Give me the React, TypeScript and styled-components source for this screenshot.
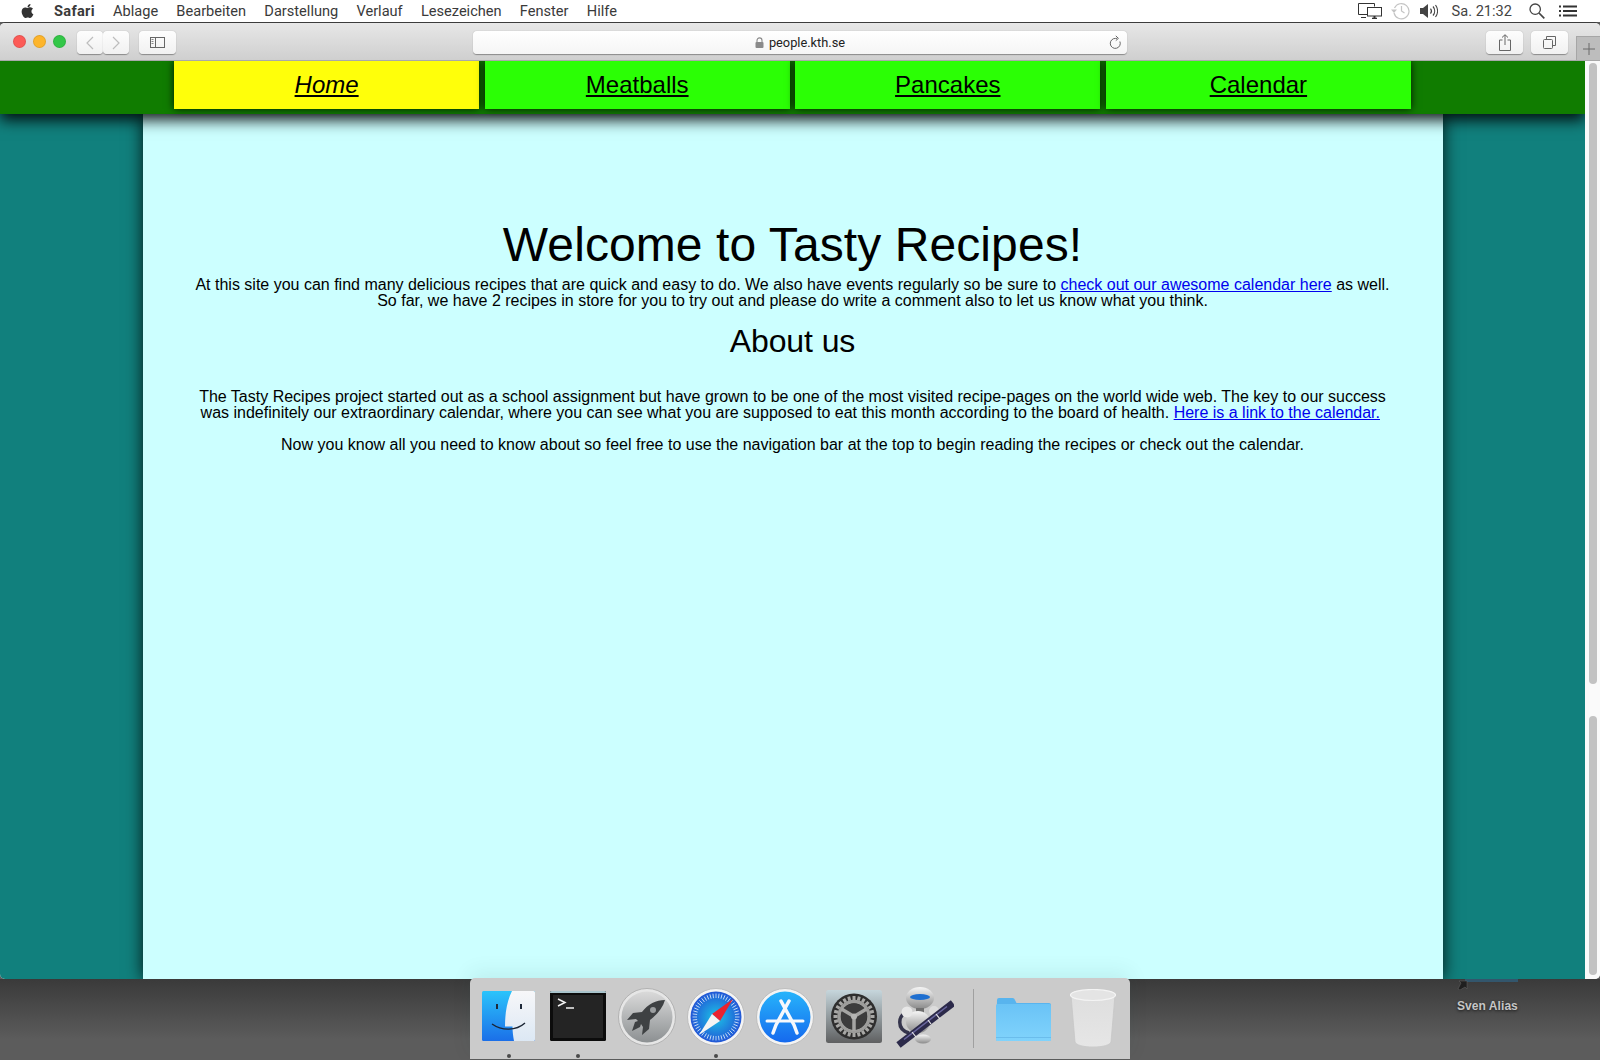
import React from 'react';
import styled, { createGlobalStyle } from 'styled-components';
import { FaApple } from 'react-icons/fa';

const GlobalStyle = createGlobalStyle`
    html, body {
        margin: 0;
        padding: 0;
        background: #5c5c5c;
    }
    * {
        box-sizing: border-box;
    }
`;

const Screen = styled.div`
    width: 1600px;
    height: 1060px;
    overflow: hidden;
    display: flex;
    flex-direction: column;
    font-family: 'Liberation Sans', Arial, sans-serif;
`;

/* system menu bar */
const MenuBar = styled.div`
    height: 22px;
    flex: none;
    background: #fff;
    display: flex;
    align-items: center;
    padding: 0 23px 0 20px;
    font-family: Roboto, 'Liberation Sans', sans-serif;
    font-size: 14.6px;
    color: #3a3a3a;
`;

const AppleMark = styled.span`
    display: flex;
    width: 15px;
    margin-right: 19px;
    color: #333;
    font-size: 16px;
`;

const MenuItem = styled.span<{ $bold?: boolean }>`
    margin-right: 18.2px;
    font-weight: ${p => (p.$bold ? 700 : 400)};
    letter-spacing: ${p => (p.$bold ? '0.3px' : '0')};
`;

const StatusArea = styled.div`
    margin-left: auto;
    display: flex;
    align-items: center;
    color: #444;
`;

const StatusSlot = styled.span<{ $gap: number }>`
    display: flex;
    margin-right: ${p => p.$gap}px;
`;

/* browser window */
const BrowserWindow = styled.div`
    height: 957px;
    flex: none;
    display: flex;
    flex-direction: column;
    overflow: hidden;
    border-top: 1px solid #3c3c3c;
    border-radius: 5px;
    background: #fafafa;
`;

const Toolbar = styled.div`
    height: 38px;
    flex: none;
    position: relative;
    z-index: 3;
    display: flex;
    align-items: flex-start;
    padding: 8px 0 0 13px;
    background: linear-gradient(#e7e7e7, #cfcfcf);
    border-bottom: 1px solid #a9a9a9;
`;

const TrafficLight = styled.span<{ $color: string }>`
    width: 13px;
    height: 13px;
    margin: 4px 7px 0 0;
    border-radius: 50%;
    background: ${p => p.$color};
    border: 1px solid rgba(0, 0, 0, 0.1);
`;

const ToolButton = styled.div<{ $width: number; $left?: number }>`
    width: ${p => p.$width}px;
    height: 23px;
    margin-left: ${p => p.$left ?? 0}px;
    display: flex;
    align-items: center;
    justify-content: center;
    flex: none;
    background: linear-gradient(#fdfdfd, #f1f1f1);
    border-radius: 4px;
    box-shadow: 0 0.5px 1px rgba(0, 0, 0, 0.35);
`;

const AddressBar = styled.div`
    position: relative;
    width: 654px;
    height: 23px;
    margin: 0 359px 0 297px;
    flex: none;
    display: flex;
    align-items: center;
    justify-content: center;
    gap: 5px;
    background: linear-gradient(#ffffff, #f5f5f5);
    border-radius: 4px;
    box-shadow: 0 0.5px 1px rgba(0, 0, 0, 0.35);
    font-family: Roboto, 'Liberation Sans', sans-serif;
    font-size: 12.8px;
    color: #222;
`;

const ReloadSlot = styled.span`
    position: absolute;
    right: 5px;
    top: 4px;
    display: flex;
`;

const NewTabTab = styled.div`
    position: absolute;
    right: 0;
    top: 13px;
    width: 24px;
    height: 24px;
    display: flex;
    align-items: center;
    justify-content: center;
    background: #bdbdbd;
    border-left: 1px solid #a6a6a6;
    border-top: 1px solid #a6a6a6;
`;

const Viewport = styled.div`
    flex: 1;
    min-height: 0;
    display: flex;
`;

const Page = styled.div`
    flex: 1;
    min-width: 0;
    display: flex;
    flex-direction: column;
    background: #11807d;
`;

const Scrollbar = styled.div`
    width: 15px;
    flex: none;
    position: relative;
    z-index: 3;
    padding: 2px 3px 0 4px;
    background: #fafafa;
`;

const ScrollThumb = styled.div<{ $height: number; $gap?: number }>`
    height: ${p => p.$height}px;
    margin-bottom: ${p => p.$gap ?? 0}px;
    background: #c2c2c2;
    border-radius: 4px;
`;

/* the page inside the browser */
const Nav = styled.nav`
    position: relative;
    z-index: 2;
    height: 53px;
    flex: none;
    display: flex;
    justify-content: center;
    gap: 5.6px;
    background: #107c00;
    box-shadow: 0 6px 14px rgba(0, 0, 0, 0.9);
`;

const NavLink = styled.a<{ $current?: boolean }>`
    width: 305px;
    height: 48px;
    display: flex;
    align-items: center;
    justify-content: center;
    background: ${p => (p.$current ? '#ffff0a' : '#2bff05')};
    box-shadow: 0 0 8px rgba(0, 0, 0, 0.85);
    color: #000;
    font-size: 24px;
    font-style: ${p => (p.$current ? 'italic' : 'normal')};
    text-decoration: underline;
`;

const Main = styled.main`
    width: 1300px;
    flex: 1;
    margin: 0 auto;
    padding-top: 101px;
    background: #ccffff;
    color: #000;
    text-align: center;
    box-shadow: 0 0 16px rgba(0, 0, 0, 0.85);
`;

const Title = styled.h1`
    margin: 0 0 2px;
    font-size: 48px;
    font-weight: 400;
    line-height: 60px;
    letter-spacing: 0.09px;
`;

const Subtitle = styled.h2`
    margin: -2px 0 29px;
    font-size: 32px;
    font-weight: 400;
    line-height: 37px;
    letter-spacing: -0.1px;
`;

const Para = styled.p`
    margin: 0 0 16px;
    font-size: 16px;
    line-height: 16px;
`;

const InlineLink = styled.a`
    color: #0000ee;
    text-decoration: underline;
`;

/* desktop strip below the window */
const Desktop = styled.div`
    flex: 1;
    position: relative;
    display: flex;
    justify-content: center;
    background: linear-gradient(#3a3a3a, #5c5c5c 75%);
`;

const Dock = styled.div`
    position: relative;
    width: 660px;
    height: 81px;
    margin-top: -1px;
    padding-left: 4px;
    display: flex;
    align-items: flex-start;
    background: #cbcbcb;
    border-radius: 5px 5px 0 0;
    box-shadow: 0 -6px 20px rgba(0, 60, 60, 0.08);
`;

const DockSlot = styled.div<{ $width?: number; $top?: number }>`
    position: relative;
    width: ${p => p.$width ?? 69}px;
    flex: none;
    padding-top: ${p => p.$top ?? 10}px;
    display: flex;
    justify-content: center;
`;

const RunningDot = styled.span`
    position: absolute;
    top: 76px;
    left: 50%;
    width: 4px;
    height: 4px;
    margin-left: -2px;
    border-radius: 50%;
    background: #4a4a4a;
`;

const DockDivider = styled.div`
    width: 1px;
    height: 59px;
    margin: 11px 15px 0 16px;
    flex: none;
    background: #a0a0a0;
`;

const DesktopAlias = styled.div`
    position: absolute;
    left: 1457px;
    top: 0;
    width: 70px;
`;

const AliasName = styled.div`
    margin-top: 9px;
    color: #c6c6c6;
    font-size: 12px;
    font-weight: 700;
    white-space: nowrap;
    letter-spacing: 0.06px;
    text-shadow: 0 1px 3px rgba(0, 0, 0, 0.7);
`;

/* drawings */
const DisplayIcon = () => (
    <svg width="24" height="16" viewBox="0 0 24 16" fill="none" stroke="#333" strokeWidth="1">
        <path d="M9 11.5H.5V.5h16v3" />
        <path d="M3 14.5h5" />
        <rect x="9.5" y="4.5" width="14" height="8.5" fill="#fff" />
        <path d="M14 15.5h5" strokeWidth="1.6" />
        <path d="M16.5 13v2" strokeWidth="2" />
    </svg>
);

const ClockIcon = () => (
    <svg width="19" height="18" viewBox="0 0 19 18" fill="none" stroke="#c4c4c4" strokeWidth="1.2">
        <path d="M3.5 6A7.6 7.6 0 1 1 3 11" />
        <path d="M0 7.5h6L3 11z" fill="#c4c4c4" stroke="none" />
        <path d="M10.5 4v5l3 2" />
    </svg>
);

const VolumeIcon = () => (
    <svg width="18" height="14" viewBox="0 0 18 14" fill="none" stroke="#444" strokeWidth="1.2">
        <path d="M0 4h3l5-4v14l-5-4H0z" fill="#444" stroke="none" />
        <path d="M10.5 4.5a4 4 0 0 1 0 5" />
        <path d="M13 2.5a7 7 0 0 1 0 9" />
        <path d="M15.5 1a10 10 0 0 1 0 12" />
    </svg>
);

const SearchIcon = () => (
    <svg width="16" height="16" viewBox="0 0 16 16" fill="none" stroke="#444" strokeWidth="1.3">
        <circle cx="6.2" cy="6.2" r="5.2" />
        <path d="M10 10l5.3 5.3" strokeWidth="1.7" />
    </svg>
);

const ListIcon = () => (
    <svg width="18" height="12" viewBox="0 0 18 12" fill="#333">
        <rect x="0" y="0.5" width="2" height="2" />
        <rect x="0" y="5" width="2" height="2" />
        <rect x="0" y="9.5" width="2" height="2" />
        <rect x="4" y="0.5" width="14" height="2" />
        <rect x="4" y="5" width="14" height="2" />
        <rect x="4" y="9.5" width="14" height="2" />
    </svg>
);

const ChevronIcon = ({ back }: { back?: boolean }) => (
    <svg width="8" height="14" viewBox="0 0 8 14" fill="none" stroke="#bdbdbd" strokeWidth="1.2">
        <path d={back ? 'M7 1L1 7l6 6' : 'M1 1l6 6-6 6'} />
    </svg>
);

const SidebarIcon = () => (
    <svg width="15" height="11" viewBox="0 0 15 11" fill="none" stroke="#666" strokeWidth="1">
        <rect x="0.5" y="0.5" width="14" height="10" />
        <path d="M5.5 0.5v10" />
        <path d="M1.5 2.5h2M1.5 4.5h2M1.5 6.5h2" stroke="#888" />
    </svg>
);

const LockIcon = () => (
    <svg width="9" height="11" viewBox="0 0 9 11">
        <path d="M2 5V3.4a2.5 2.5 0 0 1 5 0V5" fill="none" stroke="#8a8a8a" strokeWidth="1.1" />
        <rect x="0.5" y="5" width="8" height="6" rx="1" fill="#8a8a8a" />
    </svg>
);

const ReloadIcon = () => (
    <svg width="13" height="15" viewBox="0 0 13 15" fill="none" stroke="#666" strokeWidth="1">
        <path d="M10.9 6.5a5 5 0 1 1-4.4-3.1h1.5" />
        <path d="M6.8 .8l2.6 2.6-2.6 2.2" />
    </svg>
);

const ShareIcon = () => (
    <svg width="12" height="17" viewBox="0 0 12 17" fill="none" stroke="#666" strokeWidth="1">
        <path d="M3.5 6H.5v10.5h11V6h-3" />
        <path d="M6 11V1M3 3.5L6 .7l3 2.8" />
    </svg>
);

const TabsIcon = () => (
    <svg width="13" height="13" viewBox="0 0 13 13" fill="none" stroke="#666" strokeWidth="1">
        <rect x="0.5" y="3.5" width="9" height="9" rx="1" />
        <path d="M3.5 3V.5h9v9H10" />
    </svg>
);

const PlusIcon = () => (
    <svg width="12" height="12" viewBox="0 0 12 12" stroke="#6b6b6b" strokeWidth="1">
        <path d="M6 0v12M0 6h12" />
    </svg>
);

const FinderIcon = () => (
    <svg width="53" height="50" viewBox="0 0 53 50">
        <defs>
            <linearGradient id="finderBlue" x1="0" y1="0" x2="0" y2="1">
                <stop offset="0" stopColor="#2bc4fb" />
                <stop offset="1" stopColor="#1b6fe8" />
            </linearGradient>
            <linearGradient id="finderLight" x1="0" y1="0" x2="0" y2="1">
                <stop offset="0" stopColor="#f7f7f9" />
                <stop offset="1" stopColor="#dce8f4" />
            </linearGradient>
        </defs>
        <rect width="53" height="50" rx="1.5" fill="url(#finderBlue)" />
        <path d="M30 0h21.5A1.5 1.5 0 0 1 53 1.5v47a1.5 1.5 0 0 1-1.5 1.5H32c-1-5-1.5-10-1.5-14.5H23C23 22 25 10 30 0z" fill="url(#finderLight)" />
        <path d="M15 13v5M39 13v5" stroke="#1f2a3a" strokeWidth="2" />
        <path d="M10 33c10 7 24 7 33-1" fill="none" stroke="#1a2433" strokeWidth="1.4" />
    </svg>
);

const TerminalIcon = () => (
    <svg width="56" height="50" viewBox="0 0 56 50">
        <rect width="56" height="50" rx="1.5" fill="#0c0c0c" />
        <path d="M0 1.5A1.5 1.5 0 0 1 1.5 0h53A1.5 1.5 0 0 1 56 1.5V2H0z" fill="#a9c4cc" />
        <rect x="3" y="4" width="50" height="43" fill="#242424" />
        <path d="M8 8l7 3.5-7 3.5" fill="none" stroke="#f2f2f2" strokeWidth="1.5" />
        <path d="M16 17h8" stroke="#f2f2f2" strokeWidth="1.5" />
    </svg>
);

const LaunchpadIcon = () => (
    <svg width="58" height="58" viewBox="0 0 58 58">
        <defs>
            <linearGradient id="launchFace" x1="0" y1="0" x2="0" y2="1">
                <stop offset="0" stopColor="#dadada" />
                <stop offset="1" stopColor="#8c9092" />
            </linearGradient>
        </defs>
        <circle cx="29" cy="29" r="28.5" fill="#e6e6e6" stroke="#b2b2b2" strokeWidth="1" />
        <circle cx="29" cy="29" r="25.5" fill="url(#launchFace)" />
        <path d="M47 12c-9 0-17 4-23 12l-9 1-6 7 9-1 2 2-3 1-3 9 8-4 1-3 2 3-1 8 7-6 1-9c8-6 13-13 15-20z" fill="#3e4143" />
        <circle cx="35" cy="22" r="3" fill="#9b9ea0" />
    </svg>
);

const safariTicks = Array.from({ length: 48 }, (_, i) => (i * 360) / 48);

const SafariIcon = () => (
    <svg width="58" height="58" viewBox="0 0 58 58">
        <defs>
            <radialGradient id="safariFace">
                <stop offset="0" stopColor="#1cc4e6" />
                <stop offset="1" stopColor="#2257d6" />
            </radialGradient>
        </defs>
        <circle cx="29" cy="29" r="28.5" fill="#f4f4f4" stroke="#bdbdbd" strokeWidth="1" />
        <circle cx="29" cy="29" r="25.5" fill="url(#safariFace)" />
        {safariTicks.map(a => (
            <path key={a} d="M29 5.5v4.5" stroke="#d8e8fa" strokeWidth="0.8" transform={`rotate(${a} 29 29)`} />
        ))}
        <path d="M46 11L25 26l8 7z" fill="#e8222f" />
        <path d="M12 47l13-21 8 7z" fill="#f4f4f4" />
    </svg>
);

const AppStoreIcon = () => (
    <svg width="58" height="58" viewBox="0 0 58 58">
        <defs>
            <linearGradient id="storeFace" x1="0" y1="0" x2="0" y2="1">
                <stop offset="0" stopColor="#27b4fb" />
                <stop offset="1" stopColor="#1569ee" />
            </linearGradient>
        </defs>
        <circle cx="29" cy="29" r="28.5" fill="#f4f4f4" stroke="#bdbdbd" strokeWidth="1" />
        <circle cx="29" cy="29" r="25.5" fill="url(#storeFace)" />
        <g fill="none" stroke="#f6f8fc" strokeLinecap="round">
            <path d="M33 13L20 37l-3 8" strokeWidth="3.5" />
            <path d="M25 13l13 24 3 8" strokeWidth="3.5" />
            <path d="M11 33h36" strokeWidth="3" />
        </g>
    </svg>
);

const gearTeeth = Array.from({ length: 24 }, (_, i) => i * 15);

const PrefsIcon = () => (
    <svg width="56" height="53" viewBox="0 0 56 53">
        <defs>
            <linearGradient id="prefsFace" x1="0" y1="0" x2="0" y2="1">
                <stop offset="0" stopColor="#c6d6dc" />
                <stop offset="1" stopColor="#5f6061" />
            </linearGradient>
        </defs>
        <rect width="56" height="53" rx="2.5" fill="url(#prefsFace)" />
        <circle cx="28" cy="26.5" r="23" fill="#2e2e2e" />
        {gearTeeth.map(a => (
            <rect key={a} x="26.5" y="6" width="3" height="4" fill="#a8a8a6" transform={`rotate(${a} 28 26.5)`} />
        ))}
        <circle cx="28" cy="26.5" r="15" fill="none" stroke="#9d9d9b" strokeWidth="3.5" />
        <circle cx="28" cy="26.5" r="13" fill="#3c3c3c" />
        <path d="M28 26.5L28 41M28 26.5L15.5 19M28 26.5L40.5 19" stroke="#a5a5a3" strokeWidth="3.5" />
        <circle cx="28" cy="26.5" r="3" fill="#b5b5b3" />
    </svg>
);

const AutomatorIcon = () => (
    <svg width="62" height="62" viewBox="0 0 62 62">
        <defs>
            <linearGradient id="robotBody" x1="0" y1="0" x2="0" y2="1">
                <stop offset="0" stopColor="#f6f6f6" />
                <stop offset="1" stopColor="#8a8a8a" />
            </linearGradient>
        </defs>
        <path d="M15 26C6 29 4 43 17 47" fill="none" stroke="#35354c" strokeWidth="3.5" />
        <ellipse cx="28" cy="12" rx="14" ry="11" fill="url(#robotBody)" />
        <ellipse cx="28" cy="11" rx="10" ry="3" fill="#1f6fd0" />
        <rect x="24" y="22" width="8" height="5" fill="#6f6f6f" />
        <ellipse cx="26" cy="36" rx="12" ry="11" fill="url(#robotBody)" />
        <circle cx="15" cy="26" r="5.5" fill="#e8e8e8" />
        <circle cx="42" cy="25" r="5" fill="#dcdcdc" />
        <ellipse cx="31" cy="53" rx="8" ry="4.5" fill="url(#robotBody)" />
        <path d="M6.5 59L61 17" stroke="#2c2a4a" strokeWidth="7" />
        <path d="M12 53.5L55 20.5" stroke="#6a67a0" strokeWidth="1.5" />
        <path d="M20 46l4 5M44 28l4 5M36 34l3 4" stroke="#e8e8e8" strokeWidth="1.2" />
    </svg>
);

const FolderIcon = () => (
    <svg width="55" height="43" viewBox="0 0 55 43">
        <defs>
            <linearGradient id="folderFace" x1="0" y1="0" x2="0" y2="1">
                <stop offset="0" stopColor="#6ac3f6" />
                <stop offset="1" stopColor="#80d3fc" />
            </linearGradient>
        </defs>
        <path d="M1 2a2 2 0 0 1 2-2h13a3 3 0 0 1 3 2l1.5 3H53a2 2 0 0 1 2 2v34a2 2 0 0 1-2 2H2a2 2 0 0 1-2-2z" fill="#58b4ee" />
        <rect y="6" width="55" height="37" rx="1.5" fill="url(#folderFace)" />
        <path d="M0 39.5h55" stroke="#6bbdec" strokeWidth="1" />
    </svg>
);

const TrashIcon = () => (
    <svg width="46" height="58" viewBox="0 0 46 58">
        <defs>
            <linearGradient id="binFace" x1="0" y1="0" x2="0" y2="1">
                <stop offset="0" stopColor="#dedede" />
                <stop offset="1" stopColor="#e6e6e6" />
            </linearGradient>
        </defs>
        <path d="M1 6l4 47c1 3 8 5 18 5s17-2 18-5l4-47z" fill="url(#binFace)" stroke="#c6c6c6" strokeWidth="0.8" />
        <ellipse cx="23" cy="6" rx="22.5" ry="5.5" fill="#e4e4e4" stroke="#f4f4f4" strokeWidth="1.2" />
    </svg>
);

const AliasIcon = () => (
    <svg width="62" height="11" viewBox="0 0 62 11" style={{ display: 'block' }}>
        <rect x="8" y="0" width="53" height="3" fill="#33566c" />
        <path d="M1 10L4 4 2 2h8v8L8 8l-5 3z" fill="#1f1f1f" stroke="#666" strokeWidth="0.5" />
    </svg>
);

const menuItems = ['Ablage', 'Bearbeiten', 'Darstellung', 'Verlauf', 'Lesezeichen', 'Fenster', 'Hilfe'];
const navItems = ['Home', 'Meatballs', 'Pancakes', 'Calendar'];

export default function App(): JSX.Element {
    return (
        <>
            <GlobalStyle />
            <Screen>
                <MenuBar>
                    <AppleMark>
                        <FaApple />
                    </AppleMark>
                    <MenuItem $bold>Safari</MenuItem>
                    {menuItems.map(item => (
                        <MenuItem key={item}>{item}</MenuItem>
                    ))}
                    <StatusArea>
                        <StatusSlot $gap={9}><DisplayIcon /></StatusSlot>
                        <StatusSlot $gap={10}><ClockIcon /></StatusSlot>
                        <StatusSlot $gap={14}><VolumeIcon /></StatusSlot>
                        <StatusSlot $gap={17}>Sa. 21:32</StatusSlot>
                        <StatusSlot $gap={14}><SearchIcon /></StatusSlot>
                        <ListIcon />
                    </StatusArea>
                </MenuBar>
                <BrowserWindow>
                    <Toolbar>
                        <TrafficLight $color="#fc5b57" />
                        <TrafficLight $color="#fdb52c" />
                        <TrafficLight $color="#33c748" />
                        <ToolButton $width={26} $left={4}><ChevronIcon back /></ToolButton>
                        <ToolButton $width={26}><ChevronIcon /></ToolButton>
                        <ToolButton $width={37} $left={10}><SidebarIcon /></ToolButton>
                        <AddressBar>
                            <LockIcon />
                            people.kth.se
                            <ReloadSlot><ReloadIcon /></ReloadSlot>
                        </AddressBar>
                        <ToolButton $width={37}><ShareIcon /></ToolButton>
                        <ToolButton $width={37} $left={8}><TabsIcon /></ToolButton>
                        <NewTabTab><PlusIcon /></NewTabTab>
                    </Toolbar>
                    <Viewport>
                        <Page>
                            <Nav>
                                {navItems.map((item, i) => (
                                    <NavLink key={item} $current={i === 0}>{item}</NavLink>
                                ))}
                            </Nav>
                            <Main>
                                <Title>Welcome to Tasty Recipes!</Title>
                                <Para>
                                    At this site you can find many delicious recipes that are quick and easy to do. We also have events regularly so be sure to{' '}
                                    <InlineLink>check out our awesome calendar here</InlineLink> as well.
                                    <br />
                                    So far, we have 2 recipes in store for you to try out and please do write a comment also to let us know what you think.
                                </Para>
                                <Subtitle>About us</Subtitle>
                                <Para>
                                    The Tasty Recipes project started out as a school assignment but have grown to be one of the most visited recipe-pages on the world wide web. The key to our success
                                    <br />
                                    was indefinitely our extraordinary calendar, where you can see what you are supposed to eat this month according to the board of health.{' '}
                                    <InlineLink>Here is a link to the calendar.</InlineLink>{'\u00a0'}
                                </Para>
                                <Para>
                                    Now you know all you need to know about so feel free to use the navigation bar at the top to begin reading the recipes or check out the calendar.
                                </Para>
                            </Main>
                        </Page>
                        <Scrollbar>
                            <ScrollThumb $height={621} $gap={32} />
                            <ScrollThumb $height={259} />
                        </Scrollbar>
                    </Viewport>
                </BrowserWindow>
                <Desktop>
                    <Dock>
                        <DockSlot $top={13}><FinderIcon /><RunningDot /></DockSlot>
                        <DockSlot $top={13}><TerminalIcon /><RunningDot /></DockSlot>
                        <DockSlot><LaunchpadIcon /></DockSlot>
                        <DockSlot><SafariIcon /><RunningDot /></DockSlot>
                        <DockSlot><AppStoreIcon /></DockSlot>
                        <DockSlot $top={12}><PrefsIcon /></DockSlot>
                        <DockSlot $top={8}><AutomatorIcon /></DockSlot>
                        <DockDivider />
                        <DockSlot $top={20}><FolderIcon /></DockSlot>
                        <DockSlot $top={11}><TrashIcon /></DockSlot>
                    </Dock>
                    <DesktopAlias>
                        <AliasIcon />
                        <AliasName>Sven Alias</AliasName>
                    </DesktopAlias>
                </Desktop>
            </Screen>
        </>
    );
}
